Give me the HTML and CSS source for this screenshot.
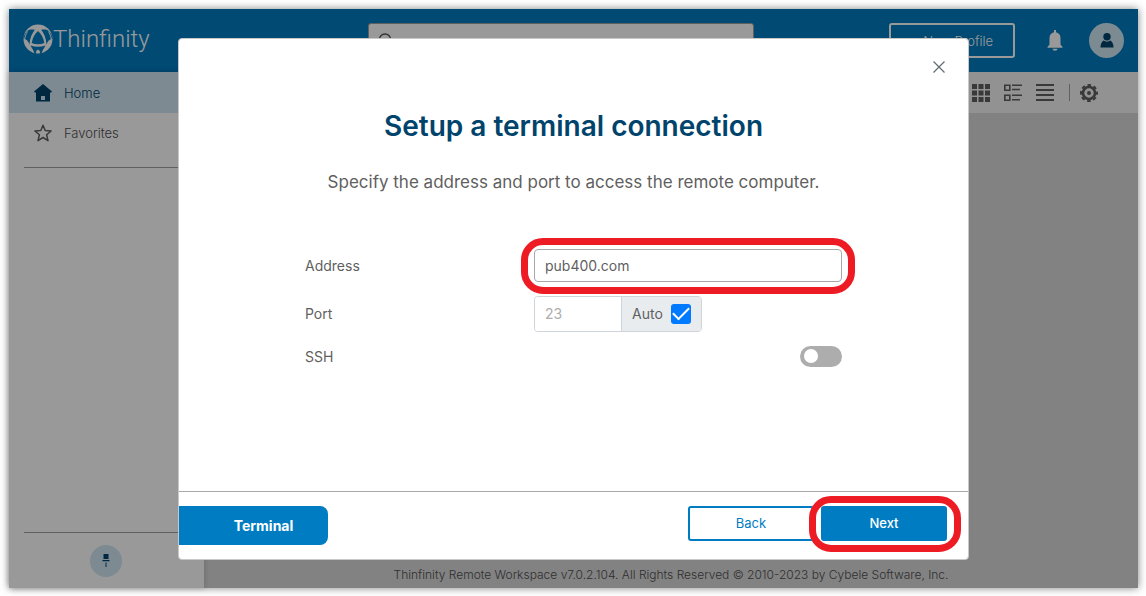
FILE: index.html
```html
<!DOCTYPE html>
<html lang="en">
<head>
<meta charset="utf-8">
<meta name="viewport" content="width=device-width, initial-scale=1">
<title>Thinfinity Remote Workspace</title>
<link rel="stylesheet" href="styles.css">
</head>
<body>
<div class="app">
  <header class="header">
    <a class="logo" href="#">
      <svg class="logo-mark" viewBox="0 0 30 30" aria-hidden="true">
        <circle cx="15" cy="15" r="14.500" fill="#fff"/>
        <g fill="#007cc2">
          <path d="M15 7c3 2.500 5.500 7 6.300 12-4 1.600-8.600 1.600-12.600 0C9.500 14 12 9.500 15 7z"/>
          <path d="M11.800 5.800C9 9.500 6.800 14 6.500 20.500 5.500 17.500 3.500 15 .3 14.500 1 11 2.500 8.500 4.500 6.700 6.500 5.300 9 5.200 11.800 5.800z"/>
          <path d="M18.200 5.800C21 9.500 23.200 14 23.500 20.500 24.500 17.500 26.500 15 29.700 14.500 29 11 27.500 8.500 25.500 6.700 23.500 5.300 21 5.200 18.200 5.800z"/>
          <path d="M7.500 21.500c5 1.600 10 1.600 15 0-1.500 2.500-3 5-4 8l-1.500.3c.2-2-.5-4-2-4s-2.200 2-2 4l-1.500-.3c-1-3-2.500-5.500-4-8z"/>
        </g>
        <path d="M4.500 7.500C3 10 2 12.500 1.500 15.500M25.500 7.500C27 10 28 12.500 28.500 15.500" fill="none" stroke="#fff" stroke-width="1"/>
      </svg>
      <span class="logo-name">Thinfinity</span>
    </a>
    <label class="search">
      <svg viewBox="0 0 16 16" width="16" height="16" aria-hidden="true"><circle cx="7" cy="6.500" r="5.500" fill="none" stroke="#555" stroke-width="1.400"/><path d="M11 10.500l4 4" stroke="#555" stroke-width="1.400"/></svg>
      <input type="search" aria-label="Search">
    </label>
    <div class="actions">
      <button class="btn-profile" type="button">+ New Profile</button>
      <button class="icon-btn bell" type="button" aria-label="Notifications">
        <svg viewBox="0 0 16 21" width="16" height="21"><path fill="#fff" d="M7 0h2v2.200c2.800.5 4.500 2.600 4.500 5.800v6.500L15.500 17v.8H.5V17l2-2.500V8C2.500 4.800 4.200 2.700 7 2.200zM5.500 18.800h5a2.500 2 0 0 1-5 0z"/></svg>
      </button>
      <button class="icon-btn avatar" type="button" aria-label="Account">
        <svg viewBox="0 0 14 15" width="14" height="15"><circle cx="7" cy="3.700" r="3.700" fill="#00446b"/><path fill="#00446b" d="M3.500 7.500Q7 9.800 10.500 7.500 13.500 9.500 13.500 14.500H.5Q.5 9.500 3.500 7.500z"/></svg>
      </button>
    </div>
  </header>

  <div class="workspace">
    <aside class="sidebar">
      <nav class="nav">
        <a class="nav-item active" href="#">
          <svg viewBox="0 0 18 18" width="18" height="18" aria-hidden="true"><path fill="#00446b" fill-rule="evenodd" d="M9 0l9 7.500-.8 1H16v9H2v-9H.8L0 7.500zM7 12v4h4v-4z"/></svg>
          Home
        </a>
        <a class="nav-item" href="#">
          <svg viewBox="0 0 18 18" width="18" height="18" aria-hidden="true"><path fill="none" stroke="#5f5f5f" stroke-width="1.500" stroke-linejoin="round" d="M9 1.200l2.200 5.300 5.900.5-4.500 3.800 1.400 5.900L9 13.500l-5 3.200 1.400-5.900L.9 7l5.900-.5z"/></svg>
          Favorites
        </a>
      </nav>
      <div class="sidebar-foot">
        <button class="icon-btn pin" type="button" aria-label="Pin sidebar">
          <svg viewBox="0 0 8 14" width="8" height="14"><path fill="#00446b" d="M1.500 0h5v5h-5zM.5 6h7v1.200h-7zM3.500 8.500h1V13h-1z"/></svg>
        </button>
      </div>
    </aside>
    <main class="content">
      <div class="toolbar">
        <button class="icon-btn" type="button" aria-label="Grid view"><svg viewBox="0 0 18 18" width="18" height="18"><path fill="#5f5f5f" d="M0 0h5v5H0zM6.500 0h5v5h-5zM13 0h5v5h-5zM0 6.500h5v5H0zM6.500 6.500h5v5h-5zM13 6.500h5v5h-5zM0 13h5v5H0zM6.500 13h5v5h-5zM13 13h5v5h-5z"/></svg></button>
        <button class="icon-btn" type="button" aria-label="Detail view"><svg viewBox="0 0 18 18" width="18" height="18"><path fill="none" stroke="#5f5f5f" stroke-width="1.600" d="M.8 1.200h5v5h-5zM.8 11.200h5v5h-5zM8 1.200h10M8 5.500h8M8 11.200h10M8 15.700h8"/></svg></button>
        <button class="icon-btn" type="button" aria-label="List view"><svg viewBox="0 0 18 18" width="18" height="18"><path stroke="#5f5f5f" stroke-width="2" d="M0 1h18M0 6h18M0 11h18M0 16h18"/></svg></button>
        <span class="divider"></span>
        <button class="icon-btn" type="button" aria-label="Settings"><svg viewBox="0 0 18 18" width="18" height="18"><circle cx="9" cy="9" r="6" fill="none" stroke="#5f5f5f" stroke-width="2.600"/><circle cx="9" cy="9" r="8" fill="none" stroke="#5f5f5f" stroke-width="2" stroke-dasharray="3.600 2.683" stroke-dashoffset="1.800"/><circle cx="9" cy="9" r="2" fill="#5f5f5f"/></svg></button>
      </div>
      <footer class="copyright">Thinfinity Remote Workspace v7.0.2.104. All Rights Reserved © 2010-2023 by Cybele Software, Inc.</footer>
    </main>
  </div>

  <div class="backdrop">
    <form class="dialog" role="dialog" aria-modal="true" aria-labelledby="dialog-title">
      <div class="dialog-top">
        <button class="icon-btn" type="button" aria-label="Close"><svg viewBox="0 0 12 12" width="12" height="12"><path stroke="#5f6a73" stroke-width="1.200" d="M.5.5l11 11M11.500.5l-11 11"/></svg></button>
      </div>
      <div class="dialog-body">
        <h1 id="dialog-title">Setup a terminal connection</h1>
        <p class="lead">Specify the address and port to access the remote computer.</p>
        <div class="fields">
          <label for="address">Address</label>
          <div class="marked"><input id="address" class="text" type="text" value="pub400.com"></div>
          <label for="port">Port</label>
          <div class="port-group">
            <input id="port" type="text" value="23" disabled>
            <label class="auto">Auto <input type="checkbox" checked></label>
          </div>
          <label for="ssh">SSH</label>
          <input id="ssh" class="switch" type="checkbox" role="switch">
        </div>
      </div>
      <div class="dialog-foot">
        <span class="kind">Terminal</span>
        <div class="buttons">
          <button class="btn" type="button">Back</button>
          <div class="marked"><button class="btn primary" type="submit">Next</button></div>
        </div>
      </div>
    </form>
  </div>
</div>
</body>
</html>
```
FILE: styles.css
```css
* { box-sizing: border-box; }

body {
  margin: 0;
  padding: 9px 8px 8px 9px;
  background: #fff;
  color: #5f5f5f;
  font-family: Inter, "Liberation Sans", sans-serif;
  font-size: 14px;
}

a { color: inherit; text-decoration: none; }
button, input { font: inherit; color: inherit; }
svg { display: block; flex: none; }

.app {
  position: relative;
  display: flex;
  flex-direction: column;
  min-height: calc(100vh - 17px);
  box-shadow: 0 0 8px rgba(0, 0, 0, .5);
}

.header {
  display: flex;
  align-items: center;
  height: 63px;
  padding: 0 14px;
  background: #007cc2;
}

.logo { display: flex; flex: 1; align-items: center; color: #fff; }
.logo-mark { width: 30px; height: 30px; margin-top: -4px; }
.logo-name { padding-bottom: 3px; font-family: Roboto, sans-serif; font-size: 24px; font-weight: 300; line-height: 30px; }

.search {
  display: flex;
  flex: 0 1 386px;
  align-items: center;
  height: 35px;
  padding: 0 9px;
  border: 1px solid #a0a0a0;
  border-radius: 3px;
  background: #fff;
}
.search input { flex: 1; min-width: 0; border: 0; background: none; outline: 0; }

.actions { display: flex; flex: 0 0 370px; align-items: center; justify-content: flex-end; }
.btn-profile {
  width: 126px;
  height: 35px;
  padding: 0;
  border: 2px solid #fff;
  border-radius: 3px;
  background: none;
  color: #fff;
  font-size: 13px;
  font-weight: 300;
}
.icon-btn {
  display: flex;
  align-items: center;
  justify-content: center;
  padding: 0;
  border: 0;
  background: none;
}
.bell { margin: 0 26px 0 32px; }
.avatar { width: 35px; height: 35px; border-radius: 50%; background: #cfe6f3; }

.workspace { display: flex; flex: 1; }

.sidebar {
  display: flex;
  flex: 0 0 195px;
  flex-direction: column;
  justify-content: space-between;
  background: #fff;
  box-shadow: 0 0 6px rgba(0, 0, 0, .2);
  color: #505050;
  font-size: 13px;
  font-weight: 300;
  z-index: 1;
}
.nav::after { content: ""; display: block; margin: 14px 15px 0; border-top: 1px solid #a0a0a0; }
.nav-item { display: flex; align-items: center; gap: 12px; height: 40px; padding-left: 25px; }
.nav-item.active { height: 41px; background: #d0e7f4; color: #00446b; }
.sidebar-foot {
  display: flex;
  justify-content: center;
  margin: 0 16px 0 15px;
  padding: 12px 0 11px;
  border-top: 1px solid #a0a0a0;
}
.pin { width: 32px; height: 32px; border-radius: 50%; background: #d0e7f4; }

.content { display: flex; flex: 1; flex-direction: column; justify-content: space-between; background: #d9d9d9; }
.toolbar {
  display: flex;
  align-items: center;
  justify-content: flex-end;
  gap: 14px;
  height: 41px;
  padding-right: 40px;
  background: #f3f3f3;
}
.divider { width: 1px; height: 17px; margin: 0 -4px 0 1px; background: #a0a0a0; }
.copyright { padding-bottom: 5px; color: #505050; text-align: center; font-size: 12px; font-weight: 300; line-height: 16px; }

.backdrop {
  position: absolute;
  inset: 0;
  z-index: 2;
  display: grid;
  place-items: center;
  background: rgba(0, 0, 0, .4);
}
.dialog {
  width: 100%;
  max-width: 791px;
  border: 1px solid #c8c8c8;
  border-radius: 4px;
  background: #fff;
}
.dialog-top { display: flex; justify-content: flex-end; padding: 22px 23px 0; }
.dialog-body { display: flex; flex-direction: column; align-items: center; padding: 36px 20px 124px; }
h1 { margin: 0; color: #00446b; font-size: 28px; font-weight: 600; line-height: 34px; }
.lead { margin: 27px 0 0; font-size: 17px; line-height: 24px; }

.fields {
  display: grid;
  grid-template-columns: 229px 308px;
  row-gap: 14px;
  align-items: center;
  margin-top: 55px;
}
.marked { position: relative; display: flex; }
.marked::after {
  content: "";
  position: absolute;
  inset: -11px -13px -12px -13px;
  border: 7px solid #ed1c24;
  border-radius: 22px;
  pointer-events: none;
}
.buttons .marked::after { inset: -10px -14px -11px -12px; }
.text {
  width: 100%;
  height: 33px;
  padding: 0 10px;
  border: 1px solid #a8a8a8;
  border-radius: 4px;
}
.port-group {
  display: flex;
  width: 168px;
  height: 36px;
  overflow: hidden;
  border: 1px solid #ced4da;
  border-radius: 4px;
}
.port-group > input { width: 86px; padding: 0 10px; border: 0; background: #fff; color: #adadad; }
.auto {
  display: flex;
  flex: 1;
  align-items: center;
  justify-content: space-between;
  padding: 0 10px;
  border-left: 1px solid #ced4da;
  background: #e9ecef;
}
.auto input {
  appearance: none;
  display: grid;
  place-items: center;
  width: 20px;
  height: 20px;
  margin: 0;
  border-radius: 3px;
  background: #dee2e6;
}
.auto input:checked { background: #007bff; }
.auto input:checked::after {
  content: "";
  width: 14px;
  height: 7px;
  margin-bottom: 4px;
  border: solid #fff;
  border-width: 0 0 2px 2px;
  rotate: -45deg;
}
.switch {
  appearance: none;
  justify-self: end;
  display: flex;
  align-items: center;
  width: 42px;
  height: 21px;
  margin: 0;
  padding: 0 4px;
  border-radius: 11px;
  background: #adadad;
}
.switch::before { content: ""; width: 14px; height: 14px; border-radius: 50%; background: #fff; }
.switch:checked { justify-content: flex-end; background: #007cc2; }

.dialog-foot {
  display: flex;
  align-items: flex-start;
  justify-content: space-between;
  padding: 14px 21px 14px 0;
  border-top: 1px solid #a8a8a8;
}
.kind {
  width: 149px;
  padding-left: 20px;
  border-radius: 0 8px 8px 0;
  background: #007cc2;
  color: #fff;
  font-weight: 700;
  line-height: 39px;
  text-align: center;
}
.buttons { display: flex; gap: 7px; }
.btn {
  width: 126px;
  height: 35px;
  padding: 0;
  border: 2px solid #007cc2;
  border-radius: 3px;
  background: #fff;
  color: #007cc2;
  font-size: 13px;
}
.btn.primary { background: #007cc2; color: #fff; font-weight: 500; }
```
